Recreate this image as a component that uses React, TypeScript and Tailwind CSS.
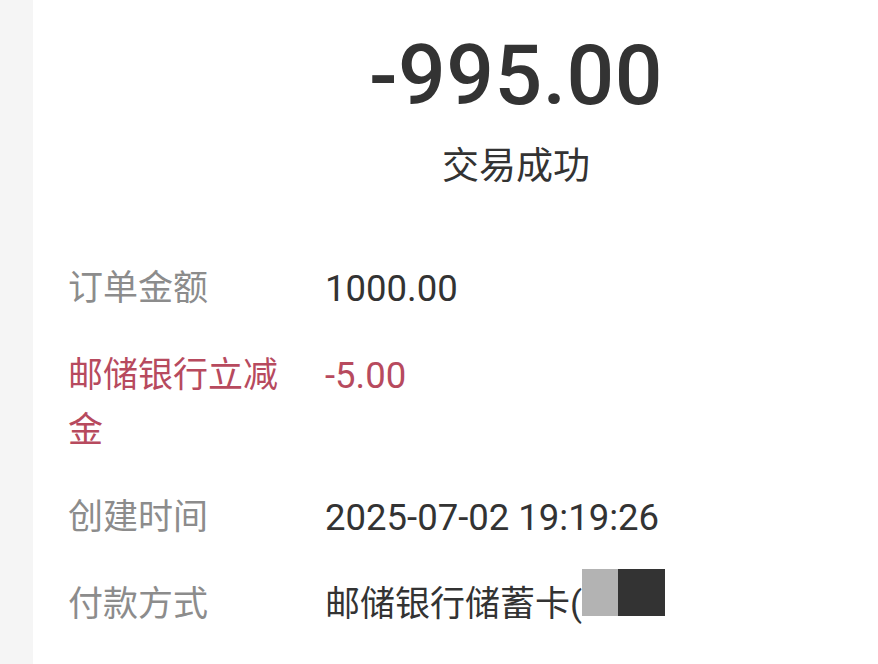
import React from "react";

const numFont = {
  fontFamily: '"Roboto", "Noto Sans CJK SC", sans-serif',
};

const rows = [
  { label: "订单金额", value: "1000.00", tone: "normal" },
  { label: "邮储银行立减金", value: "-5.00", tone: "red" },
  { label: "创建时间", value: "2025-07-02 19:19:26", tone: "normal" },
  { label: "付款方式", value: "邮储银行储蓄卡(", tone: "card" },
];

export default function App() {
  return (
    <div className="flex h-[664px] w-[878px] overflow-hidden bg-white font-['Roboto','Noto_Sans_CJK_SC',sans-serif]">
      <div className="w-[33px] shrink-0 bg-[#f5f5f5]" />
      <div className="flex-1">
        <div className="flex flex-col items-center pl-[121px] pt-[28px]">
          <div
            className="text-[84px] font-medium leading-[96px] tracking-[0.5px] text-[#333333]"
            style={numFont}
          >
            -995.00
          </div>
          <div className="mt-[18px] text-[37px] leading-[50px] text-[#333333]">
            交易成功
          </div>
        </div>

        <div className="mt-[69px] flex flex-col gap-[32px] pl-[35px]">
          {rows.map((row) => (
            <div key={row.label} className="flex text-[35px] leading-[55px]">
              <div
                className={
                  row.tone === "red"
                    ? "w-[232px] shrink-0 text-[#b74a5e]"
                    : "w-[232px] shrink-0 text-[#8c8c8c]"
                }
              >
                {row.label}
              </div>
              <div
                className={
                  row.tone === "red"
                    ? "ml-[25px] text-[36.5px] text-[#b74a5e]"
                    : "ml-[25px] text-[36.5px] text-[#333333]"
                }
              >
                {row.tone === "card" ? (
                  <span className="flex items-center">
                    <span className="text-[35px]">{row.value}</span>
                    <span className="mt-[-24px] h-[47px] w-[36px] bg-[#b3b3b3]" />
                    <span className="mt-[-24px] h-[47px] w-[47px] bg-[#333333]" />
                  </span>
                ) : (
                  row.value
                )}
              </div>
            </div>
          ))}
        </div>
      </div>
    </div>
  );
}
